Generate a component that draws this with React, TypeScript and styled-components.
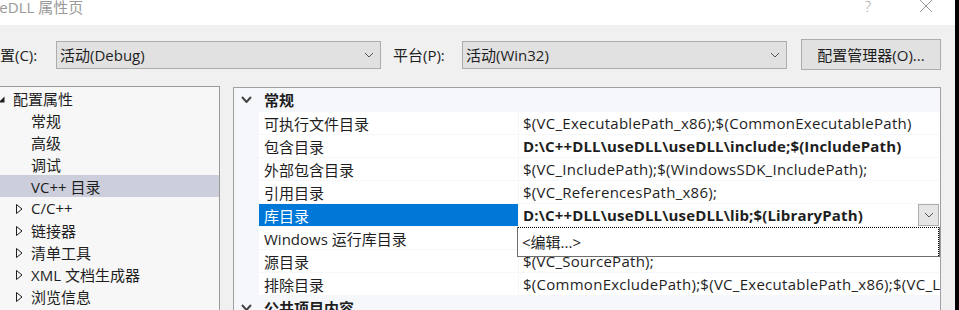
import React from 'react';
import styled, { createGlobalStyle } from 'styled-components';

const UI_FONT = '"Segoe UI", "Open Sans", "Noto Sans CJK SC", sans-serif';

const GlobalStyle = createGlobalStyle`
  html, body {
    margin: 0;
    padding: 0;
    background: #000;
    overflow: hidden;
  }
  body {
    font-family: ${UI_FONT};
    font-size: 15px;
    color: #1e1e1e;
  }
`;

type TreeItem = { label: string; level: number; expander?: 'open' | 'closed'; selected?: boolean };

const treeItems: TreeItem[] = [
  { label: '配置属性', level: 0, expander: 'open' },
  { label: '常规', level: 1 },
  { label: '高级', level: 1 },
  { label: '调试', level: 1 },
  { label: 'VC++ 目录', level: 1, selected: true },
  { label: 'C/C++', level: 1, expander: 'closed' },
  { label: '链接器', level: 1, expander: 'closed' },
  { label: '清单工具', level: 1, expander: 'closed' },
  { label: 'XML 文档生成器', level: 1, expander: 'closed' },
  { label: '浏览信息', level: 1, expander: 'closed' },
];

type Prop = { name: string; value: string; bold?: boolean; selected?: boolean };

// the value of the row under the open drop-down is hidden by it
const dirProps: Prop[] = [
  { name: '可执行文件目录', value: '$(VC_ExecutablePath_x86);$(CommonExecutablePath)' },
  { name: '包含目录', value: 'D:\\C++DLL\\useDLL\\useDLL\\include;$(IncludePath)', bold: true },
  { name: '外部包含目录', value: '$(VC_IncludePath);$(WindowsSDK_IncludePath);' },
  { name: '引用目录', value: '$(VC_ReferencesPath_x86);' },
  { name: '库目录', value: 'D:\\C++DLL\\useDLL\\useDLL\\lib;$(LibraryPath)', bold: true, selected: true },
  { name: 'Windows 运行库目录', value: '' },
  { name: '源目录', value: '$(VC_SourcePath);' },
  { name: '排除目录', value: '$(CommonExcludePath);$(VC_ExecutablePath_x86);$(VC_LibraryPath_x86)' },
];

const Chevron = ({ w = 8, h = 4, color = '#555', sw = 1 }: { w?: number; h?: number; color?: string; sw?: number }) => (
  <svg width={w + 2} height={h + 2} viewBox={`0 0 ${w + 2} ${h + 2}`}>
    <polyline points={`1,1 ${w / 2 + 1},${h + 1} ${w + 1},1`} fill="none" stroke={color} strokeWidth={sw} />
  </svg>
);

const Expander = ({ kind }: { kind: 'open' | 'closed' }) =>
  kind === 'open' ? (
    <svg width="7" height="7" viewBox="0 0 7 7">
      <polygon points="6.5,0.5 6.5,6.5 0.5,6.5" fill="#1e1e1e" />
    </svg>
  ) : (
    <svg width="7" height="10" viewBox="0 0 7 10">
      <polygon points="0.5,0.5 6,5 0.5,9.5" fill="none" stroke="#1e1e1e" strokeWidth="1" />
    </svg>
  );

export default function App() {
  return (
    <Window>
      <GlobalStyle />
      <TitleBar>
        <Title>useDLL 属性页</Title>
        <CaptionButton>?</CaptionButton>
        <CaptionButton>
          <svg width="14" height="14" viewBox="0 0 14 14">
            <path d="M1 1 L13 13 M13 1 L1 13" stroke="#999" strokeWidth="1" />
          </svg>
        </CaptionButton>
      </TitleBar>

      <Toolbar>
        <FieldLabel $width={71}>配置(C):</FieldLabel>
        <Combo>
          <span>活动(Debug)</span>
          <Chevron />
        </Combo>
        <FieldLabel $width={69} $gap={12}>平台(P):</FieldLabel>
        <Combo>
          <span>活动(Win32)</span>
          <Chevron />
        </Combo>
        <DialogButton>配置管理器(O)...</DialogButton>
      </Toolbar>

      <Main>
        <Tree>
          {treeItems.map((item) => (
            <TreeRow key={item.label} $level={item.level} $selected={!!item.selected}>
              <ExpanderBox $level={item.level}>{item.expander && <Expander kind={item.expander} />}</ExpanderBox>
              {item.label}
            </TreeRow>
          ))}
        </Tree>

        <Grid>
          <CategoryRow>
            <Gutter>
              <Chevron w={9} h={5} color="#444" sw={2} />
            </Gutter>
            <CategoryTitle>常规</CategoryTitle>
          </CategoryRow>
          {dirProps.map((p) => (
            <PropRow key={p.name}>
              <Gutter />
              <NameCell $selected={!!p.selected}>{p.name}</NameCell>
              <ValueCell $bold={!!p.bold}>
                <ValueText>{p.value}</ValueText>
                {p.selected && (
                  <>
                    <DropButton>
                      <Chevron />
                    </DropButton>
                    <Popup>
                      <PopupItem>&lt;编辑...&gt;</PopupItem>
                    </Popup>
                  </>
                )}
              </ValueCell>
            </PropRow>
          ))}
          <CategoryRow>
            <Gutter>
              <Chevron w={9} h={5} color="#444" sw={2} />
            </Gutter>
            <CategoryTitle>公共项目内容</CategoryTitle>
          </CategoryRow>
        </Grid>
      </Main>
    </Window>
  );
}

const Window = styled.div`
  width: 980px;
  height: 340px;
  margin: -13px 0 0 -25px;
  background: #f0f0f0;
  display: flex;
  flex-direction: column;
  overflow: hidden;
`;

const TitleBar = styled.div`
  height: 38px;
  flex: none;
  background: #fff;
  display: flex;
  align-items: center;
`;

const Title = styled.div`
  flex: 1;
  padding-left: 8px;
  color: #999;
  font-size: 15px;
`;

const CaptionButton = styled.div`
  width: 58px;
  height: 38px;
  display: flex;
  align-items: center;
  justify-content: center;
  color: #a0a0a0;
  font-size: 15px;
  font-weight: 300;
`;

const Toolbar = styled.div`
  height: 31px;
  margin-top: 14px;
  padding-left: 10px;
  display: flex;
  align-items: center;
`;

const FieldLabel = styled.div<{ $width: number; $gap?: number }>`
  width: ${(p) => p.$width}px;
  margin-left: ${(p) => p.$gap || 0}px;
  flex: none;
  white-space: nowrap;
`;

const Combo = styled.div`
  width: 325px;
  height: 28px;
  box-sizing: border-box;
  border: 1px solid #adadad;
  background: #e1e1e1;
  padding: 0 6px 0 3px;
  display: flex;
  align-items: center;
  justify-content: space-between;
`;

const DialogButton = styled.div`
  width: 140px;
  height: 31px;
  margin-left: 14px;
  box-sizing: border-box;
  border: 1px solid #adadad;
  background: #e1e1e1;
  display: flex;
  align-items: center;
  justify-content: center;
`;

const Main = styled.div`
  flex: 1;
  margin-top: 16px;
  padding-left: 10px;
  display: flex;
  gap: 13px;
`;

const Tree = styled.div`
  width: 235px;
  box-sizing: border-box;
  border: 1px solid #999;
  border-bottom: none;
  background: #f7f7f7;
`;

const TreeRow = styled.div<{ $level: number; $selected: boolean }>`
  height: 22px;
  display: flex;
  align-items: center;
  padding-left: ${(p) => 12 + p.$level * 18}px;
  background: ${(p) => (p.$selected ? '#cccedb' : 'transparent')};
  white-space: nowrap;
`;

const ExpanderBox = styled.span<{ $level: number }>`
  width: 15px;
  flex: none;
  display: flex;
  align-items: center;
  padding-top: ${(p) => (p.$level === 0 ? 2 : 1)}px;
`;

const Grid = styled.div`
  width: 708px;
  margin-top: 1px;
  box-sizing: border-box;
  border: 1px solid #a0a0a0;
  border-bottom: none;
  background: #f5f7fb;
  display: flex;
  flex-direction: column;
  gap: 1px;
`;

const CategoryRow = styled.div`
  height: 23px;
  display: flex;
  align-items: center;
`;

const Gutter = styled.div`
  width: 25px;
  flex: none;
  display: flex;
  align-items: center;
  justify-content: center;
`;

const CategoryTitle = styled.div`
  padding-left: 5px;
  font-weight: 700;
`;

const PropRow = styled.div`
  height: 22px;
  display: grid;
  grid-template-columns: 25px 258px 1fr;
  column-gap: 1px;
`;

const NameCell = styled.div<{ $selected: boolean }>`
  background: ${(p) => (p.$selected ? '#0078d7' : '#fff')};
  color: ${(p) => (p.$selected ? '#fff' : '#1e1e1e')};
  padding-left: 5px;
  display: flex;
  align-items: center;
  white-space: nowrap;
  margin-left: -1px;
`;

const ValueCell = styled.div<{ $bold: boolean }>`
  position: relative;
  background: #fff;
  font-weight: ${(p) => (p.$bold ? 700 : 400)};
  letter-spacing: ${(p) => (p.$bold ? 0.15 : 0.27)}px;
  display: flex;
  align-items: center;
  padding-left: 4px;
  min-width: 0;
`;

const ValueText = styled.span`
  flex: 1;
  white-space: nowrap;
  overflow: hidden;
`;

const DropButton = styled.div`
  width: 21px;
  height: 22px;
  margin-right: 1px;
  box-sizing: border-box;
  border: 1px solid #adadad;
  background: #e5e5e5;
  display: flex;
  align-items: center;
  justify-content: center;
`;

const Popup = styled.div`
  position: absolute;
  left: -2px;
  right: 0;
  top: 23px;
  height: 30px;
  box-sizing: border-box;
  border: 1px solid #6e6e6e;
  border-top: none;
  background: #fff;
  z-index: 2;
  font-weight: 400;
  letter-spacing: 0;
`;

const PopupItem = styled.div`
  height: 100%;
  box-sizing: border-box;
  border-top: 1px dotted #000;
  border-right: 1px dotted #000;
  padding-left: 4px;
  padding-bottom: 2px;
  display: flex;
  align-items: center;
`;
